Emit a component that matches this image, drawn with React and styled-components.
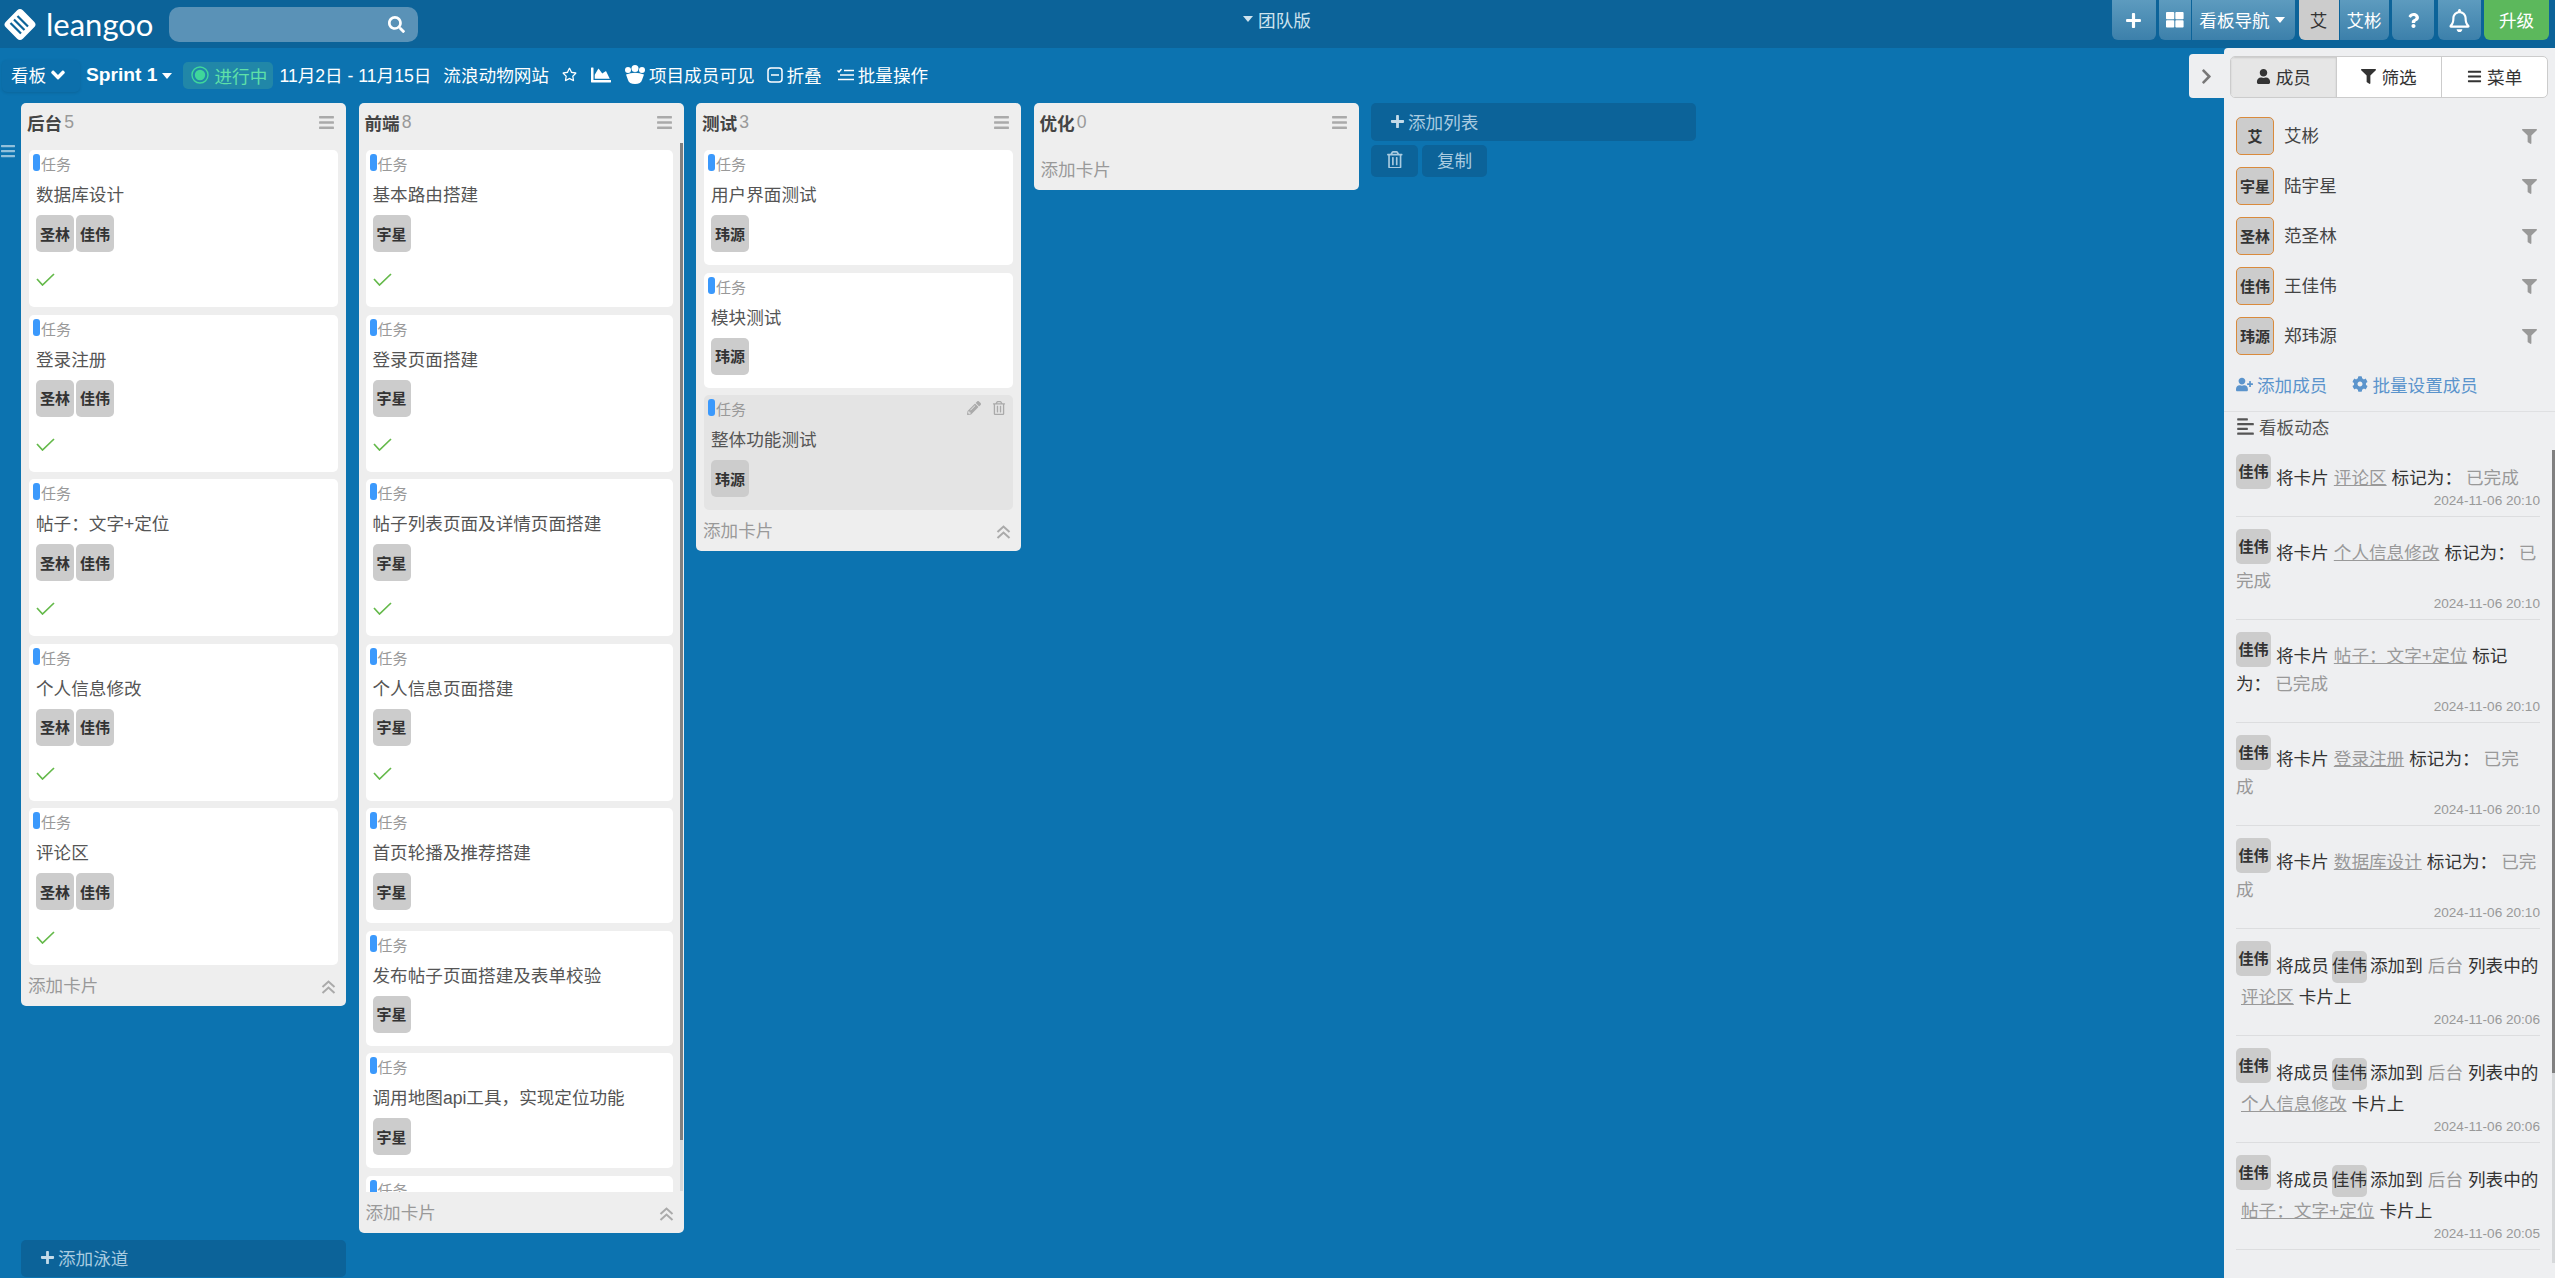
import React from 'react';
import styled, {createGlobalStyle} from 'styled-components';
import {
    FaPlus, FaThLarge, FaQuestion, FaRegBell, FaUser, FaFilter, FaBars, FaUserPlus, FaCog,
    FaAlignLeft, FaRegTrashAlt, FaPencilAlt, FaChevronRight, FaRegStar,
    FaChartArea, FaSearch, FaAngleDown,
} from 'react-icons/fa';

const FONT = '"Liberation Sans", "Noto Sans CJK SC", sans-serif';

const lanes = [
    {
        name: '后台', count: 5, cards: [
            {title: '数据库设计', people: ['圣林', '佳伟'], done: true},
            {title: '登录注册', people: ['圣林', '佳伟'], done: true},
            {title: '帖子：文字+定位', people: ['圣林', '佳伟'], done: true},
            {title: '个人信息修改', people: ['圣林', '佳伟'], done: true},
            {title: '评论区', people: ['圣林', '佳伟'], done: true},
        ],
    },
    {
        name: '前端', count: 8, tall: true, cards: [
            {title: '基本路由搭建', people: ['宇星'], done: true},
            {title: '登录页面搭建', people: ['宇星'], done: true},
            {title: '帖子列表页面及详情页面搭建', people: ['宇星'], done: true},
            {title: '个人信息页面搭建', people: ['宇星'], done: true},
            {title: '首页轮播及推荐搭建', people: ['宇星']},
            {title: '发布帖子页面搭建及表单校验', people: ['宇星']},
            {title: '调用地图api工具，实现定位功能', people: ['宇星']},
            {title: '前端联调', people: ['宇星']},
        ],
    },
    {
        name: '测试', count: 3, cards: [
            {title: '用户界面测试', people: ['玮源']},
            {title: '模块测试', people: ['玮源']},
            {title: '整体功能测试', people: ['玮源'], hovered: true},
        ],
    },
    {name: '优化', count: 0, cards: []},
];

const members = [
    {short: '艾', name: '艾彬'},
    {short: '宇星', name: '陆宇星'},
    {short: '圣林', name: '范圣林'},
    {short: '佳伟', name: '王佳伟'},
    {short: '玮源', name: '郑玮源'},
];

const doneLogs = [
    {card: '评论区', status: '已完成', time: '2024-11-06 20:10'},
    {card: '个人信息修改', status: '已完成', time: '2024-11-06 20:10'},
    {card: '帖子：文字+定位', status: '已完成', time: '2024-11-06 20:10'},
    {card: '登录注册', status: '已完\n成', time: '2024-11-06 20:10'},
    {card: '数据库设计', status: '已完成', time: '2024-11-06 20:10'},
];

const addLogs = [
    {card: '评论区', time: '2024-11-06 20:06'},
    {card: '个人信息修改', time: '2024-11-06 20:06'},
    {card: '帖子：文字+定位', time: '2024-11-06 20:05'},
];

const LogoMark = () => (
    <svg width="36" height="37" viewBox="0 0 36 37">
        <rect x="6" y="6.5" width="24" height="24" rx="4" fill="#fff" transform="rotate(45 18 18.5)"/>
        <g stroke="#0c6399" strokeWidth="2.2">
            <line x1="8.5" y1="17" x2="19" y2="27.5"/>
            <line x1="12" y1="13.5" x2="22.5" y2="24"/>
            <line x1="15.5" y1="10" x2="26" y2="20.5"/>
        </g>
    </svg>
);

const StatusDot = () => (
    <svg width="18" height="18" viewBox="0 0 18 18">
        <circle cx="9" cy="9" r="8" fill="none" stroke="#3fd79b" strokeWidth="1.4"/>
        <circle cx="9" cy="9" r="5.2" fill="#3fd79b"/>
    </svg>
);

const TeamIcon = () => (
    <svg width="20" height="19" viewBox="0 0 20 19" fill="#fff">
        <circle cx="3" cy="5" r="3"/>
        <circle cx="17" cy="5" r="3"/>
        <circle cx="10" cy="3.5" r="3.5"/>
        <path d="M1 9.5 Q10 6 19 9.5 L17 15 Q16 19 10 19 Q4 19 3 15 Z"/>
    </svg>
);

const FoldIcon = () => (
    <svg width="16" height="16" viewBox="0 0 16 16">
        <rect x="1" y="1" width="14" height="14" rx="3" fill="none" stroke="#fff" strokeWidth="1.5"/>
        <line x1="4" y1="8" x2="12" y2="8" stroke="#fff" strokeWidth="1.5"/>
    </svg>
);

const BatchIcon = () => (
    <svg width="17" height="14" viewBox="0 0 17 14">
        <g stroke="#fff" strokeWidth="1.5" fill="none">
            <path d="M0.5 2.5 L2 4 L4.5 1"/>
            <line x1="7" y1="2.5" x2="17" y2="2.5"/>
            <line x1="3" y1="7" x2="17" y2="7"/>
            <line x1="1" y1="11.5" x2="17" y2="11.5"/>
        </g>
    </svg>
);

const ThinCheck = () => (
    <svg width="19" height="13" viewBox="0 0 19 13">
        <path d="M1 6 L6.5 12 L18 1" fill="none" stroke="#64b94a" strokeWidth="1.7"/>
    </svg>
);

const DoubleUp = () => (
    <svg width="15" height="14" viewBox="0 0 15 14">
        <g fill="none" stroke="#aaa" strokeWidth="2">
            <path d="M1.5 7 L7.5 1.5 L13.5 7"/>
            <path d="M1.5 13 L7.5 7.5 L13.5 13"/>
        </g>
    </svg>
);

const Card = ({card}) => (
    <StyledCard $hovered={card.hovered}>
        <CardTag>
            <TagBar/>
            <TagLabel>任务</TagLabel>
            {card.hovered && (
                <CardTools>
                    <FaPencilAlt/>
                    <FaRegTrashAlt/>
                </CardTools>
            )}
        </CardTag>
        <CardTitle>{card.title}</CardTitle>
        <ChipRow>
            {card.people.map(name => <Chip key={name}>{name}</Chip>)}
        </ChipRow>
        {card.done && <CheckRow><ThinCheck/></CheckRow>}
    </StyledCard>
);

const Lane = ({lane}) => (
    <StyledLane $tall={lane.tall}>
        <LaneHead>
            <LaneName>{lane.name}</LaneName>
            <LaneCount>{lane.count}</LaneCount>
            <LaneMenu><FaBars/></LaneMenu>
        </LaneHead>
        <LaneBody $tall={lane.tall}>
            {lane.cards.map(card => <Card key={card.title} card={card}/>)}
            {lane.tall && <ScrollTrack $left={321} $top={0} $height={1048}><ScrollThumb $height={997}/></ScrollTrack>}
        </LaneBody>
        <LaneFoot>
            <span>添加卡片</span>
            {lane.cards.length > 0 && <FoldUp><DoubleUp/></FoldUp>}
        </LaneFoot>
    </StyledLane>
);

const App = () => {
    return (
        <Page>
            <GlobalStyle/>
            <TopBar>
                <TopLeft>
                    <LogoMark/>
                    <LogoText>leangoo</LogoText>
                    <SearchBox><FaSearch/></SearchBox>
                </TopLeft>
                <Edition><Caret $color="#cfe3ee"/>团队版</Edition>
                <TopRight>
                    <TopButton $width={44} $icon={17}><FaPlus/></TopButton>
                    <ButtonGroup>
                        <GroupPart $width={32}><FaThLarge/></GroupPart>
                        <GroupPart $width={103}>看板导航<Caret $color="#fff"/></GroupPart>
                    </ButtonGroup>
                    <ButtonGroup>
                        <TopAvatar>艾</TopAvatar>
                        <GroupPart $width={49}>艾彬</GroupPart>
                    </ButtonGroup>
                    <TopButton $width={42} $icon={15}><FaQuestion/></TopButton>
                    <TopButton $width={43} $icon={23}><FaRegBell/></TopButton>
                    <UpgradeButton>升级</UpgradeButton>
                </TopRight>
            </TopBar>
            <Content>
                <Board>
                    <SubBar>
                        <BoardMenu>看板<FaAngleDown/></BoardMenu>
                        <SprintName>Sprint 1</SprintName>
                        <Caret $color="#fff"/>
                        <StatusPill><StatusDot/>进行中</StatusPill>
                        <SubItem $gap={6}>11月2日 - 11月15日</SubItem>
                        <SubItem $gap={12}>流浪动物网站</SubItem>
                        <SubItem $gap={13} $icon={15}><FaRegStar/></SubItem>
                        <SubItem $gap={14} $icon={20}><FaChartArea/></SubItem>
                        <SubItem $gap={14}><TeamIcon/>项目成员可见</SubItem>
                        <SubItem $gap={12}><FoldIcon/>折叠</SubItem>
                        <SubItem $gap={15}><BatchIcon/>批量操作</SubItem>
                    </SubBar>
                    <LaneRow>
                        <SideHandle><FaBars/></SideHandle>
                        {lanes.map(lane => <Lane key={lane.name} lane={lane}/>)}
                        <AddColumn>
                            <AddList><FaPlus/>添加列表</AddList>
                            <AddActions>
                                <DarkButton $width={47}><FaRegTrashAlt/></DarkButton>
                                <DarkButton $width={65}>复制</DarkButton>
                            </AddActions>
                        </AddColumn>
                    </LaneRow>
                    <AddSwimlane><FaPlus/>添加泳道</AddSwimlane>
                </Board>
                <Sidebar>
                    <SideToggle><FaChevronRight/></SideToggle>
                    <Tabs>
                        <Tab $active><FaUser/>成员</Tab>
                        <Tab><FaFilter/>筛选</Tab>
                        <Tab><FaBars/>菜单</Tab>
                    </Tabs>
                    <MemberList>
                        {members.map(member => (
                            <MemberRow key={member.name}>
                                <MemberAvatar>{member.short}</MemberAvatar>
                                <MemberName>{member.name}</MemberName>
                                <MemberFilter><FaFilter/></MemberFilter>
                            </MemberRow>
                        ))}
                    </MemberList>
                    <MemberLinks>
                        <MemberLink $icon={17}><FaUserPlus/>添加成员</MemberLink>
                        <MemberLink $icon={16}><FaCog/>批量设置成员</MemberLink>
                    </MemberLinks>
                    <ActivityHead><FaAlignLeft/>看板动态</ActivityHead>
                    <ActivityList>
                        {doneLogs.map(log => (
                            <LogItem key={log.card}>
                                <LogAvatar>佳伟</LogAvatar>
                                <LogText>
                                    将卡片<LogLink>{log.card}</LogLink>标记为：<LogStatus>{log.status}</LogStatus>
                                </LogText>
                                <LogTime>{log.time}</LogTime>
                            </LogItem>
                        ))}
                        {addLogs.map(log => (
                            <LogItem key={log.card + log.time}>
                                <LogAvatar>佳伟</LogAvatar>
                                <LogText>
                                    将成员<LogChip>佳伟</LogChip>添加到<LogList>后台</LogList>列表中的<LogLink>{log.card}</LogLink>卡片上
                                </LogText>
                                <LogTime>{log.time}</LogTime>
                            </LogItem>
                        ))}
                        <ScrollTrack $left={328} $top={8} $height={813}><ScrollThumb $height={623}/></ScrollTrack>
                    </ActivityList>
                </Sidebar>
            </Content>
        </Page>
    );
};

const GlobalStyle = createGlobalStyle`
    html, body {
        margin: 0;
        padding: 0;
        overflow: hidden;
    }
    * {
        box-sizing: border-box;
    }
`;

const Page = styled.div`
    display: flex;
    flex-direction: column;
    width: 100vw;
    height: 100vh;
    overflow: hidden;
    background: #0c73b0;
    font-family: ${FONT};
    font-size: 17.6px;
`;

const TopBar = styled.header`
    display: flex;
    align-items: flex-start;
    flex: none;
    height: 48px;
    padding-right: 6px;
    background: #0c6399;
`;

const TopLeft = styled.div`
    flex: 1 1 0;
    display: flex;
    align-items: center;
    height: 48px;
    padding-left: 2px;
`;

const LogoText = styled.span`
    margin-left: 8px;
    font-family: Lato, sans-serif;
    font-size: 31px;
    line-height: 44px;
    color: #fff;
`;

const SearchBox = styled.div`
    display: flex;
    align-items: center;
    justify-content: flex-end;
    width: 249px;
    height: 35px;
    margin-left: 16px;
    padding-right: 13px;
    border-radius: 10px;
    background: #5a92b7;
    color: #fff;
    font-size: 17px;
`;

const Edition = styled.div`
    display: flex;
    align-items: center;
    gap: 2px;
    height: 38px;
    margin-left: -2px;
    color: #cfe3ee;
`;

const Caret = styled.i`
    display: inline-block;
    flex: none;
    width: 0;
    height: 0;
    margin: 0 3px 0 5px;
    border-top: 6px solid ${p => p.$color};
    border-left: 5px solid transparent;
    border-right: 5px solid transparent;
`;

const TopRight = styled.div`
    flex: 1 1 0;
    display: flex;
    justify-content: flex-end;
    gap: 3.5px;
`;

const buttonFace = `
    display: flex;
    align-items: center;
    justify-content: center;
    height: 40px;
    color: #fff;
    background: linear-gradient(#5d9bbf, #3c80ab);
`;

const TopButton = styled.div`
    ${buttonFace}
    width: ${p => p.$width}px;
    border-radius: 0 0 6px 6px;
    font-size: ${p => p.$icon}px;
`;

const ButtonGroup = styled.div`
    display: flex;
    gap: 1px;
    border-radius: 0 0 6px 6px;
    overflow: hidden;
`;

const GroupPart = styled.div`
    ${buttonFace}
    width: ${p => p.$width}px;
    padding-bottom: 1px;
`;

const TopAvatar = styled.div`
    display: flex;
    align-items: center;
    justify-content: center;
    width: 40px;
    height: 40px;
    padding-bottom: 1px;
    background: #ccc;
    color: #333;
`;

const UpgradeButton = styled.div`
    display: flex;
    align-items: center;
    justify-content: center;
    width: 65px;
    height: 40px;
    padding-bottom: 1px;
    border-radius: 0 0 6px 6px;
    background: #5cb85c;
    color: #fff;
`;

const Content = styled.div`
    flex: 1;
    display: flex;
    min-height: 0;
`;

const Board = styled.main`
    position: relative;
    flex: 1;
    min-width: 0;
`;

const SubBar = styled.div`
    display: flex;
    align-items: center;
    height: 55px;
    padding-left: 2px;
    color: #fff;
`;

const BoardMenu = styled.div`
    display: flex;
    align-items: center;
    gap: 1px;
    width: 78px;
    height: 32px;
    padding: 0 0 2px 9px;
    border-radius: 5px;
    background: #0c6fab;
    box-shadow: 0 1px 3px rgba(0, 0, 0, 0.12);
    svg {
        font-size: 22px;
    }
`;

const SprintName = styled.span`
    margin-left: 6px;
    padding-bottom: 1px;
    font-weight: bold;
    font-size: 19.2px;
`;

const StatusPill = styled.div`
    display: flex;
    align-items: center;
    gap: 5px;
    width: 90px;
    height: 27px;
    margin-left: 8px;
    padding: 0 0 1px 8px;
    border-radius: 5px;
    background: #2187a8;
    color: #5fe0a8;
`;

const SubItem = styled.div`
    display: flex;
    align-items: center;
    gap: 4px;
    margin-left: ${p => p.$gap}px;
    padding-bottom: 2px;
    white-space: nowrap;
    font-size: ${p => (p.$icon ? `${p.$icon}px` : 'inherit')};
`;

const LaneRow = styled.div`
    position: relative;
    display: flex;
    align-items: flex-start;
    gap: 12.5px;
    height: 1137px;
    padding-left: 21px;
`;

const SideHandle = styled.div`
    position: absolute;
    left: 0;
    top: 40px;
    color: rgba(255, 255, 255, 0.55);
    font-size: 16px;
    line-height: 16px;
`;

const StyledLane = styled.section`
    display: flex;
    flex-direction: column;
    flex: none;
    width: 325px;
    height: ${p => (p.$tall ? '1130px' : 'auto')};
    border-radius: 5px;
    background: #eee;
`;

const LaneHead = styled.div`
    display: flex;
    align-items: center;
    flex: none;
    height: 40px;
    padding: 0 11px 2px 6px;
`;

const LaneName = styled.span`
    font-weight: bold;
    color: #444;
`;

const LaneCount = styled.span`
    margin-left: 2px;
    color: #999;
`;

const LaneMenu = styled.span`
    display: flex;
    margin-left: auto;
    font-size: 17px;
    color: #aaa;
`;

const LaneBody = styled.div`
    position: relative;
    display: flex;
    flex-direction: column;
    flex: ${p => (p.$tall ? '1' : 'none')};
    gap: 7.5px;
    min-height: 0;
    padding: 7px ${p => (p.$tall ? '11px' : '8px')} 0 ${p => (p.$tall ? '7px' : '8px')};
    overflow: hidden;
    &:empty {
        padding-top: 6px;
    }
`;

const StyledCard = styled.article`
    flex: none;
    padding: 4px 7px 13px 4px;
    border-radius: 5px;
    background: ${p => (p.$hovered ? '#e4e4e4' : '#fff')};
`;

const CardTag = styled.div`
    display: flex;
    align-items: center;
    height: 17px;
`;

const TagBar = styled.i`
    display: block;
    width: 7px;
    height: 17px;
    border-radius: 3px;
    background: #3b99fc;
`;

const TagLabel = styled.span`
    margin: 2px 0 0 1px;
    font-size: 15px;
    color: #999;
`;

const CardTools = styled.span`
    display: flex;
    align-items: center;
    gap: 11px;
    margin-left: auto;
    font-size: 14px;
    color: #aaa;
`;

const CardTitle = styled.div`
    margin: 11px 0 0 3px;
    font-size: 17.6px;
    line-height: 26px;
    color: #555;
`;

const ChipRow = styled.div`
    display: flex;
    gap: 2px;
    margin: 7px 0 0 3px;
`;

const Chip = styled.span`
    display: flex;
    align-items: center;
    justify-content: center;
    width: 38px;
    height: 37px;
    padding-bottom: 1px;
    border-radius: 5px;
    background: #ccc;
    font-size: 15px;
    font-weight: 700;
    color: #333;
`;

const CheckRow = styled.div`
    display: flex;
    align-items: center;
    height: 29px;
    margin: 13px 0 0 3px;
`;

const LaneFoot = styled.div`
    display: flex;
    align-items: center;
    justify-content: space-between;
    flex: none;
    height: 41px;
    padding: 0 10px 3px 7px;
    color: #999;
`;

const FoldUp = styled.span`
    display: flex;
    margin-top: 5px;
`;

const AddColumn = styled.div`
    flex: none;
    width: 325px;
`;

const AddList = styled.div`
    display: flex;
    align-items: center;
    gap: 3px;
    height: 38px;
    padding: 0 0 2px 19px;
    border-radius: 5px;
    background: #0c6399;
    color: #a9cbe0;
    svg {
        font-size: 15px;
        color: #c4dbe9;
    }
`;

const AddActions = styled.div`
    display: flex;
    gap: 4px;
    margin-top: 4px;
`;

const DarkButton = styled.div`
    display: flex;
    align-items: center;
    justify-content: center;
    width: ${p => p.$width}px;
    height: 32px;
    padding-bottom: 3px;
    border-radius: 5px;
    background: #0c6399;
    color: #a9cbe0;
`;

const AddSwimlane = styled.div`
    display: flex;
    align-items: center;
    gap: 3px;
    width: 325px;
    height: 37px;
    margin-left: 21px;
    padding: 0 0 2px 19px;
    border-radius: 5px;
    background: #0c6399;
    color: #a9cbe0;
    svg {
        font-size: 15px;
        color: #c4dbe9;
    }
`;

const Sidebar = styled.aside`
    position: relative;
    flex: none;
    width: 331px;
    border-radius: 4px 0 0 0;
    background: #eeeff1;
`;

const SideToggle = styled.div`
    position: absolute;
    left: -35px;
    top: 6px;
    display: flex;
    align-items: center;
    justify-content: center;
    width: 35px;
    height: 44px;
    border-radius: 4px 0 0 4px;
    background: #eeeff1;
    color: #777;
    font-size: 17px;
`;

const Tabs = styled.div`
    display: flex;
    height: 42px;
    margin: 8px 7px 0 6px;
    border: 1px solid #ccc;
    border-radius: 5px;
    background: #fff;
    overflow: hidden;
`;

const Tab = styled.div`
    flex: 1;
    display: flex;
    align-items: center;
    justify-content: center;
    gap: 5px;
    padding-bottom: 2px;
    color: #333;
    background: ${p => (p.$active ? '#e6e6e6' : 'transparent')};
    box-shadow: ${p => (p.$active ? 'inset 0 1px 2px rgba(0, 0, 0, 0.13)' : 'none')};
    & + & {
        border-left: 1px solid #ccc;
    }
    svg {
        font-size: 15px;
    }
`;

const MemberList = styled.div`
    display: flex;
    flex-direction: column;
    gap: 12px;
    padding: 19px 18px 0 12px;
`;

const MemberRow = styled.div`
    display: flex;
    align-items: center;
    height: 38px;
`;

const MemberAvatar = styled.div`
    display: flex;
    align-items: center;
    justify-content: center;
    width: 38px;
    height: 38px;
    padding-bottom: 1px;
    border: 1px solid #d98a3c;
    border-radius: 5px;
    background: #ccc;
    font-size: 15px;
    font-weight: 700;
    color: #333;
`;

const MemberName = styled.span`
    margin: 0 0 3px 10px;
    color: #444;
`;

const MemberFilter = styled.span`
    display: flex;
    margin-left: auto;
    font-size: 15px;
    color: #999;
`;

const MemberLinks = styled.div`
    display: flex;
    gap: 25px;
    height: 39px;
    margin-top: 18px;
    padding-left: 12px;
    border-bottom: 1px solid #dfe0e2;
`;

const MemberLink = styled.span`
    display: flex;
    align-items: center;
    align-self: flex-start;
    gap: 4px;
    height: 22px;
    color: #5b94cc;
    svg {
        font-size: ${p => p.$icon}px;
    }
`;

const ActivityHead = styled.div`
    display: flex;
    align-items: center;
    gap: 4px;
    height: 30px;
    padding: 0 0 2px 12px;
    color: #555;
    svg {
        font-size: 19px;
    }
`;

const ActivityList = styled.div`
    position: relative;
    padding: 0 15px 0 12px;
`;

const LogItem = styled.div`
    display: flow-root;
    padding: 12px 0 6px;
    border-bottom: 1px solid #dcdddf;
`;

const LogAvatar = styled.span`
    float: left;
    display: flex;
    align-items: center;
    justify-content: center;
    width: 35px;
    height: 35px;
    margin-right: 5px;
    padding-bottom: 2px;
    border-radius: 5px;
    background: #ccc;
    font-size: 15px;
    font-weight: 700;
    color: #333;
`;

const LogText = styled.div`
    padding-top: 10px;
    line-height: 28px;
    color: #333;
`;

const LogLink = styled.a`
    margin: 0 5px;
    color: #999;
    text-decoration: underline;
`;

const LogStatus = styled.span`
    margin-left: 4px;
    color: #999;
    white-space: pre-line;
`;

const LogChip = styled.span`
    display: inline-block;
    height: 32px;
    margin: 0 3px;
    border-radius: 5px;
    background: #ccc;
    line-height: 30px;
    vertical-align: middle;
`;

const LogList = styled.span`
    margin: 0 5px;
    color: #999;
`;

const LogTime = styled.div`
    height: 18px;
    font-size: 13.6px;
    line-height: 18px;
    text-align: right;
    color: #999;
`;

const ScrollTrack = styled.div`
    position: absolute;
    left: ${p => p.$left}px;
    top: ${p => p.$top}px;
    width: 3px;
    height: ${p => p.$height}px;
    background: #d6d8da;
`;

const ScrollThumb = styled.div`
    height: ${p => p.$height}px;
    background: #808080;
`;

export default App;
